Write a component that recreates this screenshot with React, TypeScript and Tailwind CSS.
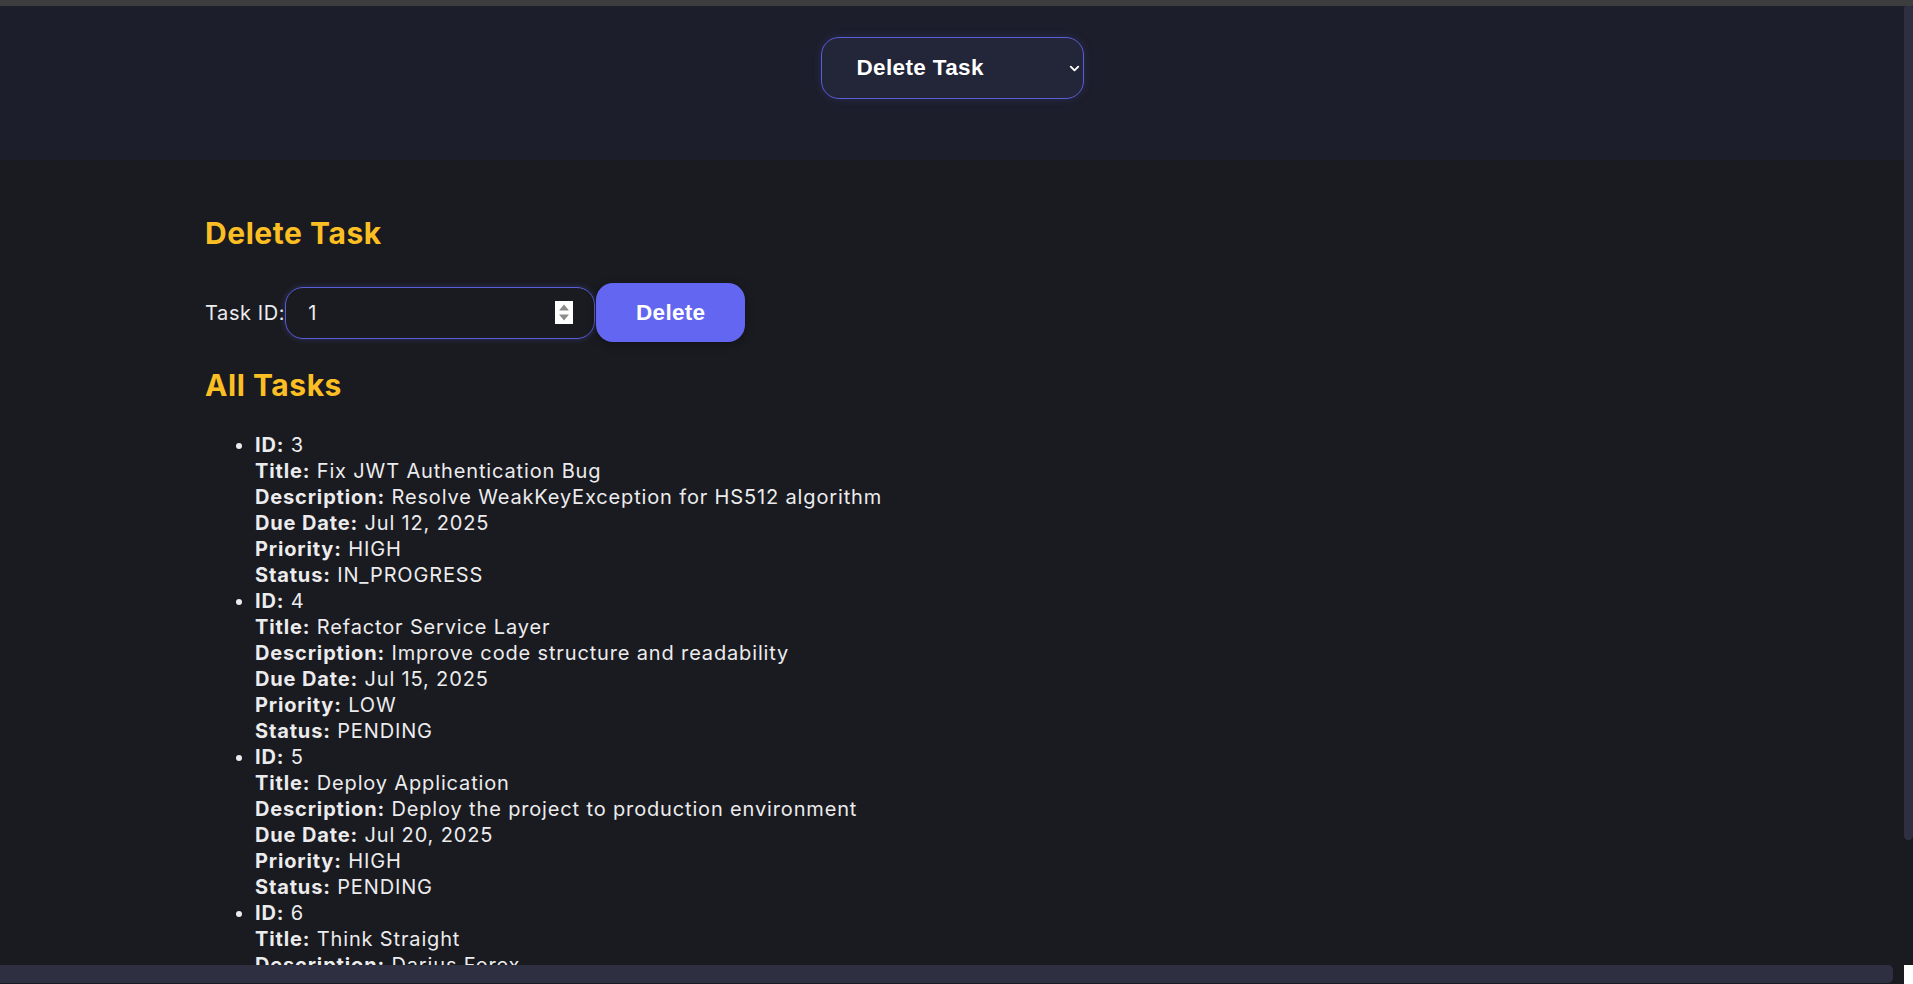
import { ChevronDown } from "lucide-react";

type Task = {
  id: number;
  title: string;
  description: string;
  dueDate: string;
  priority: string;
  status: string;
};

const tasks: Task[] = [
  {
    id: 3,
    title: "Fix JWT Authentication Bug",
    description: "Resolve WeakKeyException for HS512 algorithm",
    dueDate: "Jul 12, 2025",
    priority: "HIGH",
    status: "IN_PROGRESS",
  },
  {
    id: 4,
    title: "Refactor Service Layer",
    description: "Improve code structure and readability",
    dueDate: "Jul 15, 2025",
    priority: "LOW",
    status: "PENDING",
  },
  {
    id: 5,
    title: "Deploy Application",
    description: "Deploy the project to production environment",
    dueDate: "Jul 20, 2025",
    priority: "HIGH",
    status: "PENDING",
  },
  {
    id: 6,
    title: "Think Straight",
    description: "Darius Forex",
    dueDate: "Jul 25, 2025",
    priority: "MEDIUM",
    status: "PENDING",
  },
];

function Spinner() {
  return (
    <svg width="18" height="23" viewBox="0 0 18 23" className="shrink-0">
      <rect width="18" height="23" fill="#ffffff" />
      <path d="M4 9.5 L9 3.5 L14 9.5 Z" fill="#8c8c8c" />
      <path d="M4 13.5 L9 19.5 L14 13.5 Z" fill="#8c8c8c" />
    </svg>
  );
}

function TaskItem({ task }: { task: Task }) {
  const rows: [string, string | number][] = [
    ["ID:", task.id],
    ["Title:", task.title],
    ["Description:", task.description],
    ["Due Date:", task.dueDate],
    ["Priority:", task.priority],
    ["Status:", task.status],
  ];
  return (
    <li>
      {rows.map(([label, value]) => (
        <div key={label}>
          <strong className="font-bold">{label}</strong> {value}
        </div>
      ))}
    </li>
  );
}

export default function App() {
  return (
    <div className="flex h-screen flex-col overflow-hidden bg-[#1a1b20] font-['Inter',sans-serif] text-[#ececee]">
      <div className="h-[6px] shrink-0 bg-[#3d3d40]" />

      <div className="flex min-h-0 flex-1">
        <div className="min-w-0 flex-1 overflow-hidden">
          <header className="flex h-[154px] justify-center bg-[#1c1e2b] pt-[31px]">
            <div className="flex h-[62px] w-[263px] items-center justify-between rounded-[18px] border border-[#5a5ed8] bg-[#232539] pl-[35px] pr-px font-['Liberation_Sans',Arial,sans-serif] text-[22.5px] font-bold tracking-[0.35px] text-white shadow-[0_0_10px_rgba(99,102,241,0.18)]">
              <span>Delete Task</span>
              <ChevronDown size={15} strokeWidth={3} />
            </div>
          </header>

          <main className="px-[205px] pt-[55px]">
            <h2 className="text-[30px] font-bold leading-[36px] tracking-[0.55px] text-[#fbbf24]">
              Delete Task
            </h2>

            <div className="mt-[32px] flex items-center text-[20px]">
              <label className="tracking-[0.6px]">Task ID:</label>
              <div className="flex h-[52px] w-[310px] items-center justify-between rounded-[18px] border border-[#5a5ed8] pl-[22px] pr-[21px] shadow-[0_0_6px_rgba(99,102,241,0.3)]">
                <span>1</span>
                <Spinner />
              </div>
              <button
                type="button"
                className="ml-px h-[59px] w-[149px] rounded-[17px] bg-[#6366f1] font-['Liberation_Sans',Arial,sans-serif] text-[22.5px] font-bold tracking-[0.3px] text-white shadow-[0_2px_10px_rgba(0,0,0,0.35)]"
              >
                Delete
              </button>
            </div>

            <h2 className="mt-[25px] text-[30px] font-bold leading-[36px] tracking-[0.55px] text-[#fbbf24]">
              All Tasks
            </h2>

            <ul className="mt-[29px] list-disc pl-[50px] text-[20px] leading-[26px] tracking-[0.85px]">
              {tasks.map((task) => (
                <TaskItem key={task.id} task={task} />
              ))}
            </ul>
          </main>
        </div>

        <div className="w-[9px] shrink-0">
          <div className="h-[834px] rounded-b-[5px] rounded-t-[2px] bg-[#2e3042]" />
        </div>
      </div>

      <div className="flex h-[19px] shrink-0">
        <div className="h-[18px] w-[1893px] rounded-r-[5px] bg-[#2e3042]" />
        <div className="flex-1" />
        <div className="w-[9px] bg-white" />
      </div>
    </div>
  );
}
